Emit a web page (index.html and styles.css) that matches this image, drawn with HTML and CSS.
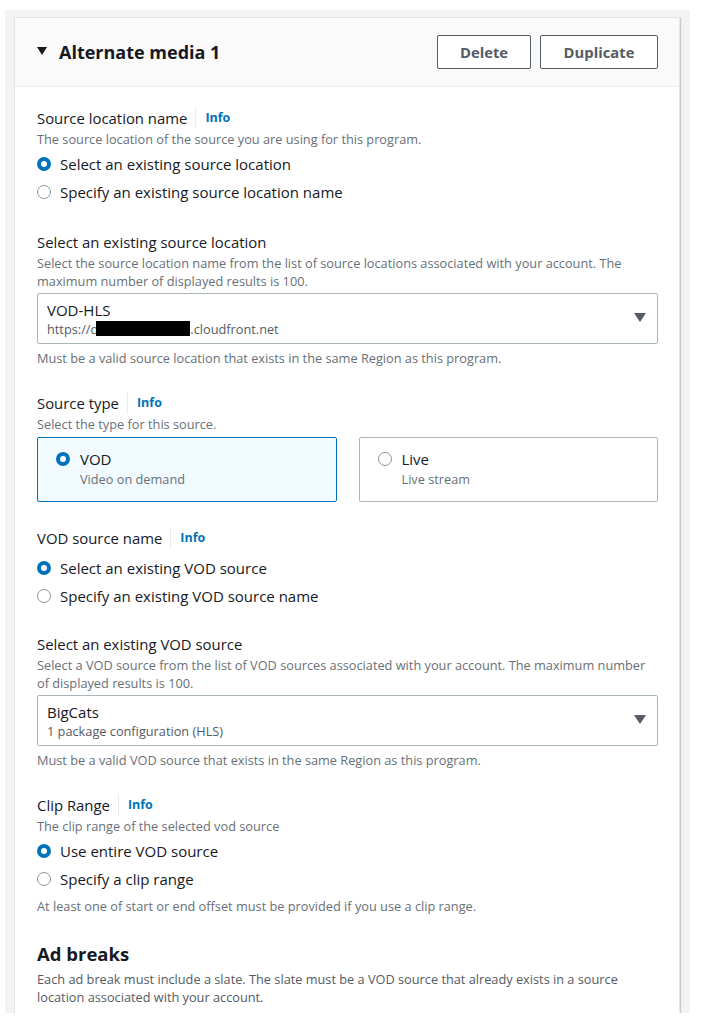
FILE: index.html
```html
<!DOCTYPE html>
<html lang="en">
<head>
<meta charset="utf-8">
<title>Alternate media 1</title>
<link rel="stylesheet" href="styles.css">
</head>
<body>
<div class="frame">
  <div class="container">
    <div class="header">
      <div class="title">
        <span class="caret"></span>
        <h2>Alternate media 1</h2>
      </div>
      <div class="actions">
        <button class="btn btn-delete" type="button">Delete</button>
        <button class="btn btn-dup" type="button">Duplicate</button>
      </div>
    </div>
    <div class="body">
      <div class="field first">
        <div class="label"><span>Source location name</span><span class="divider"></span><a class="info">Info</a></div>
        <div class="desc">The source location of the source you are using for this program.</div>
        <div class="radios">
          <div class="radio-row"><span class="radio checked"></span><span>Select an existing source location</span></div>
          <div class="radio-row"><span class="radio"></span><span>Specify an existing source location name</span></div>
        </div>
      </div>

      <div class="field">
        <div class="label"><span>Select an existing source location</span></div>
        <div class="desc">Select the source location name from the list of source locations associated with your account. The maximum number of displayed results is 100.</div>
        <div class="select">
          <div class="select-text">
            <div class="select-main">VOD-HLS</div>
            <div class="select-sub">https://d<span class="redact"></span>.cloudfront.net</div>
          </div>
          <span class="arrow"></span>
        </div>
        <div class="constraint">Must be a valid source location that exists in the same Region as this program.</div>
      </div>

      <div class="field">
        <div class="label"><span>Source type</span><span class="divider"></span><a class="info">Info</a></div>
        <div class="desc">Select the type for this source.</div>
        <div class="tiles">
          <div class="tile selected">
            <span class="radio checked"></span>
            <div>
              <div class="tile-title">VOD</div>
              <div class="tile-sub">Video on demand</div>
            </div>
          </div>
          <div class="tile">
            <span class="radio"></span>
            <div>
              <div class="tile-title">Live</div>
              <div class="tile-sub">Live stream</div>
            </div>
          </div>
        </div>
      </div>

      <div class="field">
        <div class="label"><span>VOD source name</span><span class="divider"></span><a class="info">Info</a></div>
        <div class="radios after-label">
          <div class="radio-row"><span class="radio checked"></span><span>Select an existing VOD source</span></div>
          <div class="radio-row"><span class="radio"></span><span>Specify an existing VOD source name</span></div>
        </div>
      </div>

      <div class="field tight">
        <div class="label"><span>Select an existing VOD source</span></div>
        <div class="desc">Select a VOD source from the list of VOD sources associated with your account. The maximum number of displayed results is 100.</div>
        <div class="select">
          <div class="select-text">
            <div class="select-main">BigCats</div>
            <div class="select-sub">1 package configuration (HLS)</div>
          </div>
          <span class="arrow"></span>
        </div>
        <div class="constraint">Must be a valid VOD source that exists in the same Region as this program.</div>
      </div>

      <div class="field">
        <div class="label"><span>Clip Range</span><span class="divider"></span><a class="info">Info</a></div>
        <div class="desc">The clip range of the selected vod source</div>
        <div class="radios">
          <div class="radio-row"><span class="radio checked"></span><span>Use entire VOD source</span></div>
          <div class="radio-row"><span class="radio"></span><span>Specify a clip range</span></div>
        </div>
        <div class="constraint small-gap">At least one of start or end offset must be provided if you use a clip range.</div>
      </div>

      <div class="section">
        <h3>Ad breaks</h3>
        <div class="desc section-desc">Each ad break must include a slate. The slate must be a VOD source that already exists in a source location associated with your account.</div>
      </div>
    </div>
  </div>
</div>
</body>
</html>
```

FILE: styles.css
```css
* { box-sizing: border-box; }

html, body {
  margin: 0;
  padding: 0;
  background: #ffffff;
}

body {
  font-family: "Open Sans", "Noto Sans", "Liberation Sans", sans-serif;
  color: #16191f;
  font-size: 15px;
}

.frame {
  margin: 10px 0 0 5px;
  width: 685px;
  height: 1003px;
  background: #f2f3f3;
  padding: 7px 10px 0 9px;
  overflow: hidden;
}

.container {
  width: 666px;
  background: #ffffff;
  border: 1px solid #e3e6e6;
  box-shadow: 1px 1px 1px 0 rgba(0, 28, 36, 0.18);
  min-height: 1100px;
}

.header {
  height: 69px;
  background: #fafafa;
  border-bottom: 1px solid #eaeded;
  padding: 0 21px 0 22px;
  display: flex;
  align-items: center;
  justify-content: space-between;
}

.title {
  display: flex;
  align-items: center;
}

.caret {
  width: 0;
  height: 0;
  border-left: 5px solid transparent;
  border-right: 5px solid transparent;
  border-top: 8px solid #16191f;
  margin-right: 12px;
  margin-top: -3px;
}

.title h2 {
  margin: 0;
  font-size: 18px;
  font-weight: 700;
  line-height: 24px;
  color: #16191f;
}

.actions {
  display: flex;
  gap: 9px;
}

.btn {
  height: 34px;
  border: 1px solid #545b64;
  border-radius: 2px;
  background: #ffffff;
  color: #545b64;
  font-family: inherit;
  font-size: 14.8px;
  font-weight: 700;
  padding: 0;
}

.btn-delete { width: 94px; }
.btn-dup { width: 118px; }

.body {
  padding: 19px 21px 0 22px;
}

.field { margin-top: 24px; }
.field.first { margin-top: 0; }
.field.tight { margin-top: 22px; }

.label {
  display: flex;
  align-items: center;
  line-height: 24px;
  font-size: 14.9px;
  color: #16191f;
}

.divider {
  width: 1px;
  height: 22px;
  background: #eaeded;
  margin: 0 9px 0 8px;
}

.info {
  color: #0073bb;
  font-weight: 700;
  font-size: 12.5px;
}

.desc {
  font-size: 12.75px;
  line-height: 18px;
  color: #687078;
}

.radios { margin-top: 2px; }
.radios.after-label { margin-top: 4px; }

.radio-row {
  height: 28px;
  display: flex;
  align-items: center;
  font-size: 15px;
}

.radio {
  flex: none;
  width: 14px;
  height: 14px;
  border-radius: 50%;
  border: 1.5px solid #879596;
  background: #ffffff;
  margin-right: 9px;
}

.radio.checked {
  border: 4.5px solid #0073bb;
}

.select {
  margin-top: 3px;
  height: 51px;
  border: 1px solid #aab7b8;
  border-radius: 2px;
  display: flex;
  align-items: center;
  justify-content: space-between;
  padding: 0 11px 0 9px;
}

.select-main {
  font-size: 15px;
  line-height: 20px;
}

.select-sub {
  font-size: 12.75px;
  line-height: 18px;
  color: #545b64;
  display: flex;
  align-items: center;
}

.redact {
  display: inline-block;
  width: 94px;
  height: 15px;
  background: #000000;
  margin-left: -2px;
}

.arrow {
  width: 0;
  height: 0;
  border-left: 6px solid transparent;
  border-right: 6px solid transparent;
  border-top: 9px solid #545b64;
  margin-top: -2px;
}

.constraint {
  margin-top: 5px;
  font-size: 12.75px;
  line-height: 18px;
  color: #687078;
}

.constraint.small-gap { margin-top: 4px; }

.tiles {
  margin-top: 4px;
  display: grid;
  grid-template-columns: 1fr 1fr;
  gap: 22px;
}

.tile {
  height: 65px;
  border: 1px solid #aab7b8;
  border-radius: 2px;
  padding: 10px 18px 0 18px;
  display: flex;
  align-items: flex-start;
}

.tile.selected {
  background: #f1faff;
  border-color: #0073bb;
}

.tile .radio {
  margin-top: 4px;
  margin-right: 10px;
}

.tile-title {
  font-size: 15px;
  line-height: 22px;
}

.tile-sub {
  font-size: 12.75px;
  line-height: 18px;
  color: #687078;
}

.section { margin-top: 27px; }

.section h3 {
  margin: 0;
  font-size: 18.5px;
  font-weight: 700;
  line-height: 24px;
}

.section-desc {
  margin-top: 4px;
  color: #545b64;
}
```
